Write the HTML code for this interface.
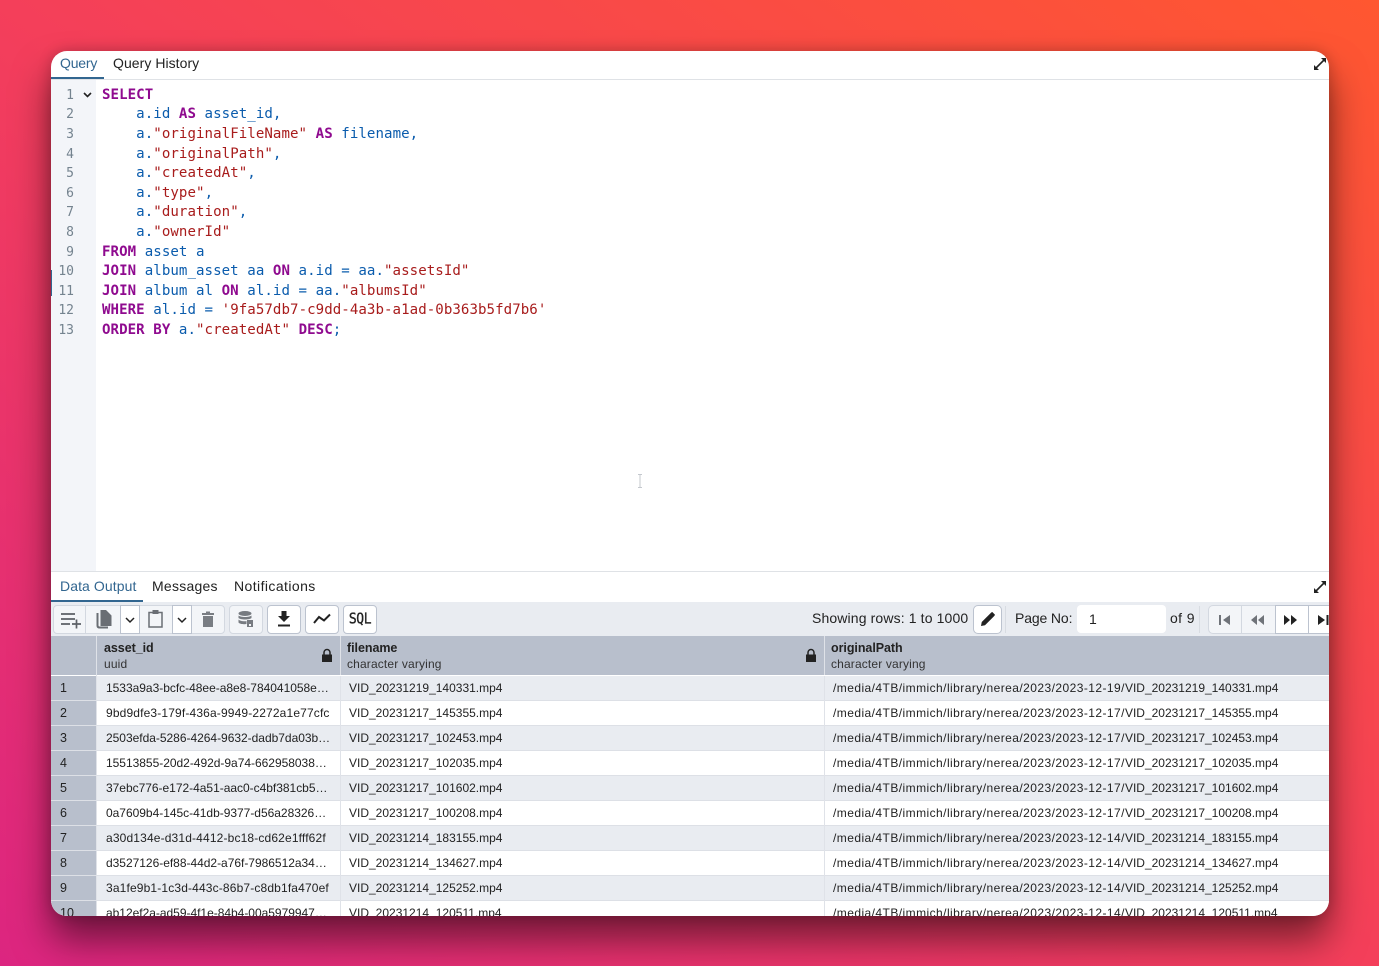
<!DOCTYPE html>
<html><head><meta charset="utf-8"><style>
html,body{margin:0;padding:0;width:1379px;height:966px;overflow:hidden}
body{background:linear-gradient(to top right,#dc2580 0%,#f43f5a 50%,#ff5730 100%);font-family:"Liberation Sans",sans-serif;color:#222}
#p{position:absolute;left:51px;top:51px;width:1278px;height:865px;background:#fff;border-radius:16px;overflow:hidden;box-shadow:0 24px 38px rgba(0,0,0,.5),0 0 14px rgba(0,0,0,.2)}
#p div{position:absolute;white-space:nowrap}
.t{font-size:14px;top:4px;line-height:17px}
.ln{left:0;width:23px;text-align:right;font:13px/19px "DejaVu Sans Mono",monospace;color:#74838f}
.c{left:51px;font:14.1px/19px "DejaVu Sans Mono",monospace;letter-spacing:.06px;color:#0b5cad;white-space:pre !important}
.c b{color:#8f0a8f;font-weight:bold}.c i{font-style:normal;color:#a81c1c}
.btn{background:#f3f5f8;border:1px solid #d3d8e0;box-sizing:border-box;border-radius:4px}
.w{background:#fff;border-color:#bcc3cf}
.r{left:0;width:1278px;height:25px;box-sizing:border-box;border-bottom:1px solid #dde0e6;font-size:12px;line-height:24px}
.r .n{left:0;width:45px;height:25px;background:#b8bfcc;padding-left:9px;box-sizing:border-box;border-bottom:1px solid #dde0e6;font-size:12.5px}
.r .x{left:55px;letter-spacing:.15px}.r .k{letter-spacing:-.02px}.r .y{left:298px}.r .z{left:782px}
.r .z em{font-style:normal;letter-spacing:.44px}
.r .s1{left:289px;width:1px;height:25px;background:#dfe2e8}.r .s2{left:773px;width:1px;height:25px;background:#dfe2e8}
.o{background:#e9ecf1}.e{background:#fff}
.h1{font-size:12.5px;font-weight:bold;top:589px;line-height:16px;letter-spacing:-.05px;color:#222}
.h2{font-size:12px;top:605px;line-height:16px;letter-spacing:.15px;color:#333}
svg{position:absolute;overflow:visible}
</style></head><body><div id="p">
<div class="t" style="left:9px;color:#326690;letter-spacing:-.2px">Query</div>
<div class="t" style="left:62px;letter-spacing:.05px">Query History</div>
<div style="left:0;top:26px;width:53px;height:2px;background:#326690"></div>
<div style="left:0;top:28px;width:1278px;height:1px;background:#dfe2e6"></div>
<svg style="left:1262px;top:6px" width="14" height="14" viewBox="0 0 14 14"><path d="M2 12 12 2" stroke="#222" stroke-width="1.6"/><path d="M1 8v5h5zM13 6V1H8z" fill="#222"/></svg>

<div style="left:0;top:29px;width:45px;height:491px;background:#f3f5f9"></div>
<div style="left:0;top:219px;width:1px;height:26px;background:#326690"></div>
<svg style="left:32px;top:41px" width="9" height="6" viewBox="0 0 9 6"><path d="M1 1 4.500 4.500 8 1" fill="none" stroke="#222" stroke-width="1.6"/></svg>
<div class="ln" style="top:35px">1</div><div class="ln" style="top:54px">2</div><div class="ln" style="top:74px">3</div><div class="ln" style="top:94px">4</div><div class="ln" style="top:113px">5</div><div class="ln" style="top:133px">6</div><div class="ln" style="top:152px">7</div><div class="ln" style="top:172px">8</div><div class="ln" style="top:192px">9</div><div class="ln" style="top:211px">10</div><div class="ln" style="top:231px">11</div><div class="ln" style="top:250px">12</div><div class="ln" style="top:270px">13</div>
<div class="c" style="top:35px"><b>SELECT</b></div>
<div class="c" style="top:54px">    a.id <b>AS</b> asset_id,</div>
<div class="c" style="top:74px">    a.<i>"originalFileName"</i> <b>AS</b> filename,</div>
<div class="c" style="top:94px">    a.<i>"originalPath"</i>,</div>
<div class="c" style="top:113px">    a.<i>"createdAt"</i>,</div>
<div class="c" style="top:133px">    a.<i>"type"</i>,</div>
<div class="c" style="top:152px">    a.<i>"duration"</i>,</div>
<div class="c" style="top:172px">    a.<i>"ownerId"</i></div>
<div class="c" style="top:192px"><b>FROM</b> asset a</div>
<div class="c" style="top:211px"><b>JOIN</b> album_asset aa <b>ON</b> a.id = aa.<i>"assetsId"</i></div>
<div class="c" style="top:231px"><b>JOIN</b> album al <b>ON</b> al.id = aa.<i>"albumsId"</i></div>
<div class="c" style="top:250px"><b>WHERE</b> al.id = <i>'9fa57db7-c9dd-4a3b-a1ad-0b363b5fd7b6'</i></div>
<div class="c" style="top:270px"><b>ORDER BY</b> a.<i>"createdAt"</i> <b>DESC</b>;</div>
<svg style="left:586px;top:423px" width="6" height="14"><path d="M1 .5h4M3 .5v13M1 13.500h4" stroke="#c4c8ce" fill="none"/></svg>

<div style="left:0;top:520px;width:1278px;height:1px;background:#dfe2e6"></div>
<div class="t" style="left:9px;top:527px;color:#326690;letter-spacing:.09px">Data Output</div>
<div class="t" style="left:101px;top:527px;letter-spacing:.25px">Messages</div>
<div class="t" style="left:183px;top:527px;letter-spacing:.42px">Notifications</div>
<div style="left:0;top:549px;width:92px;height:2px;background:#326690"></div>
<svg style="left:1262px;top:529px" width="14" height="14" viewBox="0 0 14 14"><path d="M2 12 12 2" stroke="#222" stroke-width="1.6"/><path d="M1 8v5h5zM13 6V1H8z" fill="#222"/></svg>

<div style="left:0;top:551px;width:1278px;height:34px;background:#e9ecf1"></div>
<div class="btn" style="left:2px;top:554px;width:172px;height:29px"></div>
<div style="left:34px;top:555px;width:1px;height:27px;background:#d3d8e0"></div>
<div class="btn w" style="left:69px;top:554px;width:20px;height:29px;border-radius:0"></div>
<div class="btn w" style="left:121px;top:554px;width:20px;height:29px;border-radius:0"></div>
<svg style="left:10px;top:561px" width="21" height="16" viewBox="0 0 21 16"><path d="M0 2h14M0 7h14M0 12h9M11 12h9M15.500 7.500v9" stroke="#5c6066" stroke-width="1.700" fill="none"/></svg>
<svg style="left:45px;top:559px" width="17" height="19" viewBox="0 0 17 19"><path d="M4.500 0H10l5.500 5.500V16H4.500z" fill="#6a6e74"/><path d="M1.500 3v12.500q0 2 2 2H12" stroke="#6a6e74" stroke-width="2" fill="none"/></svg>
<svg style="left:74px;top:566px" width="10" height="6" viewBox="0 0 10 6"><path d="M1 1 5 5 9 1" fill="none" stroke="#222" stroke-width="1.500"/></svg>
<svg style="left:97px;top:559px" width="16" height="18" viewBox="0 0 16 18"><rect x="1" y="2.500" width="13" height="14.500" fill="none" stroke="#6a6e74" stroke-width="1.500"/><rect x="4.500" y="0" width="6" height="4" fill="#6a6e74"/></svg>
<svg style="left:126px;top:566px" width="10" height="6" viewBox="0 0 10 6"><path d="M1 1 5 5 9 1" fill="none" stroke="#222" stroke-width="1.500"/></svg>
<svg style="left:151px;top:560px" width="12" height="16" viewBox="0 0 12 16"><path d="M0 2h12v2H0zM4 .5h4V2H4zM1 5h10v11H1z" fill="#797d83"/></svg>
<div class="btn" style="left:178px;top:554px;width:34px;height:29px"></div>
<svg style="left:187px;top:560px" width="16" height="17" viewBox="0 0 16 17"><ellipse cx="7" cy="2.500" rx="6.500" ry="2.500" fill="#777b81"/><path d="M.5 4.500c2 2 11 2 13 0v2.500c-2 2-11 2-13 0zM.5 8.500c2 2 7 2 8 1.500V13c-3 .5-7 0-8-1.500z" fill="#777b81"/><path d="M9 9h6v7H9z" fill="#777b81"/><path d="M11 13h2v2h-2z" fill="#f3f5f8"/></svg>
<div class="btn w" style="left:216px;top:554px;width:34px;height:29px"></div>
<svg style="left:226px;top:560px" width="14" height="16" viewBox="0 0 14 16"><path d="M4.500 0h5v5H13L7 11 1 5h3.500z" fill="#222"/><path d="M1 14.500h12" stroke="#222" stroke-width="2"/></svg>
<div class="btn w" style="left:254px;top:554px;width:34px;height:29px"></div>
<svg style="left:262px;top:562px" width="18" height="12" viewBox="0 0 18 12"><path d="M1 10 6 4 11 7.500 17 1.500" fill="none" stroke="#222" stroke-width="2"/></svg>
<div class="btn w" style="left:292px;top:554px;width:34px;height:29px"></div>
<div style="left:292px;top:554px;width:34px;text-align:center;font:13px/30px 'DejaVu Sans Mono',monospace;letter-spacing:-.4px;transform:scaleY(1.15);color:#222;-webkit-text-stroke:.3px #222">SQL</div>

<div style="left:761px;top:558px;font-size:14px;line-height:18px;letter-spacing:.13px">Showing rows: 1 to 1000</div>
<div class="btn w" style="left:922px;top:554px;width:29px;height:29px;border-radius:5px"></div>
<svg style="left:930px;top:561px" width="14" height="14" viewBox="0 0 13 13"><path d="M0 13 .7 9.300 8.500 1.500l3 3-7.800 7.800zM9.500.5 10.500 0l2.500 2.500-.5 1-1 1-3-3z" fill="#222"/></svg>
<div style="left:954px;top:555px;width:1px;height:27px;background:#d8dce2"></div>
<div style="left:964px;top:558px;font-size:14px;line-height:18px;letter-spacing:-.13px">Page No:</div>
<div style="left:1026px;top:554px;width:89px;height:28px;background:#fff;border-radius:4px"></div>
<div style="left:1038px;top:559px;font-size:14px;line-height:18px">1</div>
<div style="left:1119px;top:558px;font-size:14px;line-height:18px;letter-spacing:.4px">of 9</div>
<div style="left:1148px;top:555px;width:1px;height:27px;background:#d8dce2"></div>
<div class="btn" style="left:1157px;top:554px;width:34px;height:29px;border-radius:5px 0 0 5px"></div>
<div class="btn" style="left:1190px;top:554px;width:35px;height:29px;border-radius:0"></div>
<div class="btn w" style="left:1224px;top:554px;width:34px;height:29px;border-radius:0"></div>
<div class="btn w" style="left:1257px;top:554px;width:40px;height:29px;border-radius:0"></div>
<svg style="left:1168px;top:564px" width="12" height="10" viewBox="0 0 12 10"><path d="M0 0h2v10H0zM11 0v10L4 5z" fill="#6f7379"/></svg>
<svg style="left:1200px;top:564px" width="13" height="10" viewBox="0 0 13 10"><path d="M6 0v10L0 5zM13 0v10L7 5z" fill="#6f7379"/></svg>
<svg style="left:1233px;top:564px" width="13" height="10" viewBox="0 0 13 10"><path d="M0 0v10l6-5zM7 0v10l6-5z" fill="#222"/></svg>
<svg style="left:1267px;top:564px" width="12" height="10" viewBox="0 0 12 10"><path d="M0 0v10l7-5zM8.500 0h2v10h-2z" fill="#222"/></svg>

<div style="left:0;top:585px;width:1278px;height:39px;background:#b8bfcc"></div>
<div style="left:45px;top:585px;width:1px;height:280px;background:#dfe2e8;z-index:3"></div>
<div style="left:289px;top:585px;width:1px;height:39px;background:#dfe2e8"></div>
<div style="left:773px;top:585px;width:1px;height:39px;background:#dfe2e8"></div>
<div class="h1" style="left:53px">asset_id</div><div class="h2" style="left:53px">uuid</div>
<div class="h1" style="left:296px">filename</div><div class="h2" style="left:296px">character varying</div>
<div class="h1" style="left:780px">originalPath</div><div class="h2" style="left:780px">character varying</div>
<svg style="left:271px;top:598px" width="10" height="13" viewBox="0 0 10 13"><path d="M0 5.500h10V13H0z" fill="#222"/><path d="M2 6V3.500a3 3 0 0 1 6 0V6" fill="none" stroke="#222" stroke-width="1.500"/></svg>
<svg style="left:755px;top:598px" width="10" height="13" viewBox="0 0 10 13"><path d="M0 5.500h10V13H0z" fill="#222"/><path d="M2 6V3.500a3 3 0 0 1 6 0V6" fill="none" stroke="#222" stroke-width="1.500"/></svg>

<div class="r o" style="top:625px"><div class="n">1</div><div class="x k">1533a9a3-bcfc-48ee-a8e8-784041058e…</div><div class="y">VID_20231219_140331.mp4</div><div class="z"><em>/media/4TB/immich/library/nerea/2023/2023-12-19/</em>VID_20231219_140331.mp4</div><div class="s1"></div><div class="s2"></div></div>
<div class="r e" style="top:650px"><div class="n">2</div><div class="x">9bd9dfe3-179f-436a-9949-2272a1e77cfc</div><div class="y">VID_20231217_145355.mp4</div><div class="z"><em>/media/4TB/immich/library/nerea/2023/2023-12-17/</em>VID_20231217_145355.mp4</div><div class="s1"></div><div class="s2"></div></div>
<div class="r o" style="top:675px"><div class="n">3</div><div class="x k">2503efda-5286-4264-9632-dadb7da03b…</div><div class="y">VID_20231217_102453.mp4</div><div class="z"><em>/media/4TB/immich/library/nerea/2023/2023-12-17/</em>VID_20231217_102453.mp4</div><div class="s1"></div><div class="s2"></div></div>
<div class="r e" style="top:700px"><div class="n">4</div><div class="x k">15513855-20d2-492d-9a74-662958038…</div><div class="y">VID_20231217_102035.mp4</div><div class="z"><em>/media/4TB/immich/library/nerea/2023/2023-12-17/</em>VID_20231217_102035.mp4</div><div class="s1"></div><div class="s2"></div></div>
<div class="r o" style="top:725px"><div class="n">5</div><div class="x k">37ebc776-e172-4a51-aac0-c4bf381cb5…</div><div class="y">VID_20231217_101602.mp4</div><div class="z"><em>/media/4TB/immich/library/nerea/2023/2023-12-17/</em>VID_20231217_101602.mp4</div><div class="s1"></div><div class="s2"></div></div>
<div class="r e" style="top:750px"><div class="n">6</div><div class="x k">0a7609b4-145c-41db-9377-d56a28326…</div><div class="y">VID_20231217_100208.mp4</div><div class="z"><em>/media/4TB/immich/library/nerea/2023/2023-12-17/</em>VID_20231217_100208.mp4</div><div class="s1"></div><div class="s2"></div></div>
<div class="r o" style="top:775px"><div class="n">7</div><div class="x">a30d134e-d31d-4412-bc18-cd62e1fff62f</div><div class="y">VID_20231214_183155.mp4</div><div class="z"><em>/media/4TB/immich/library/nerea/2023/2023-12-14/</em>VID_20231214_183155.mp4</div><div class="s1"></div><div class="s2"></div></div>
<div class="r e" style="top:800px"><div class="n">8</div><div class="x k">d3527126-ef88-44d2-a76f-7986512a34…</div><div class="y">VID_20231214_134627.mp4</div><div class="z"><em>/media/4TB/immich/library/nerea/2023/2023-12-14/</em>VID_20231214_134627.mp4</div><div class="s1"></div><div class="s2"></div></div>
<div class="r o" style="top:825px"><div class="n">9</div><div class="x">3a1fe9b1-1c3d-443c-86b7-c8db1fa470ef</div><div class="y">VID_20231214_125252.mp4</div><div class="z"><em>/media/4TB/immich/library/nerea/2023/2023-12-14/</em>VID_20231214_125252.mp4</div><div class="s1"></div><div class="s2"></div></div>
<div class="r e" style="top:850px"><div class="n">10</div><div class="x k">ab12ef2a-ad59-4f1e-84b4-00a5979947…</div><div class="y">VID_20231214_120511.mp4</div><div class="z"><em>/media/4TB/immich/library/nerea/2023/2023-12-14/</em>VID_20231214_120511.mp4</div><div class="s1"></div><div class="s2"></div></div>
</div></body></html>
